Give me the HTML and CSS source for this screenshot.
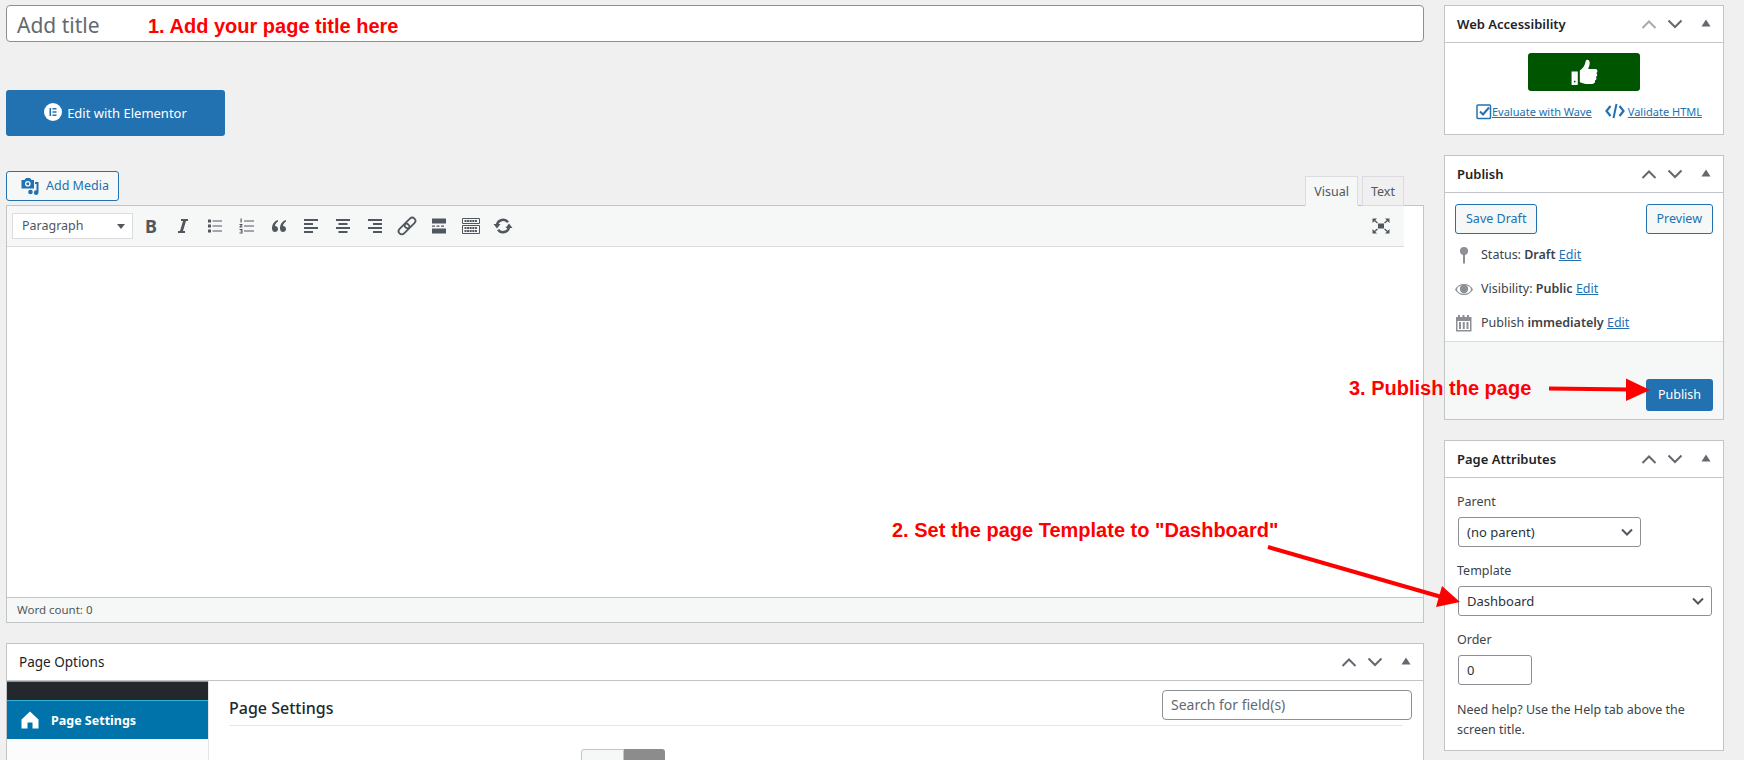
FILE: index.html
```html
<!DOCTYPE html>
<html lang="en">
<head>
<meta charset="utf-8">
<title>Add New Page</title>
<link rel="stylesheet" href="styles.css">
</head>
<body>
<svg width="0" height="0" class="defs">
  <symbol id="up" viewBox="0 0 16 12"><path d="M1.500 10 8 3.500 14.500 10" fill="none" stroke="currentColor" stroke-width="2"/></symbol>
  <symbol id="down" viewBox="0 0 16 12"><path d="M1.500 2.500 8 9 14.500 2.500" fill="none" stroke="currentColor" stroke-width="2"/></symbol>
  <symbol id="tri" viewBox="0 0 10 8"><path d="M5 .5 9.500 7.500H.5z" fill="currentColor"/></symbol>
  <symbol id="chev" viewBox="0 0 12 8"><path d="M1 1.500 6 6.500 11 1.500" fill="none" stroke="currentColor" stroke-width="2"/></symbol>
</svg>
<div class="page">
  <main class="main">
    <div class="title-box">Add title</div>
    <a class="elementor-btn">
      <svg class="e-logo" width="18" height="18" viewBox="0 0 18 18"><circle cx="9" cy="9" r="9" fill="#fff"/><path d="M5.500 5h1.600v8H5.500zM8.500 5h4v1.500h-4zM8.500 8.200h4v1.500h-4zM8.500 11.500h4V13h-4z" fill="#2271b1"/></svg>
      <span>Edit with Elementor</span>
    </a>
    <section class="editor">
      <div class="editor-top">
        <a class="add-media">
          <svg width="18" height="18" viewBox="0 0 18 18"><path d="M.5 3h3L5 1h4l1.500 2h2.500v8.500H.5z" fill="#2271b1"/><circle cx="6.800" cy="6.800" r="2.800" fill="#fff"/><circle cx="6.800" cy="6.800" r="1.500" fill="#2271b1"/><path d="M14 5h3.500v10.500a2.300 2.300 0 1 1-2-2.200V7H14z" fill="#2271b1"/><circle cx="9.500" cy="15" r="2.300" fill="#2271b1"/></svg>
          <span>Add Media</span>
        </a>
        <div class="tabs">
          <span class="tab tab-on">Visual</span>
          <span class="tab">Text</span>
        </div>
      </div>
      <div class="editor-frame">
        <div class="toolbar">
          <div class="format">Paragraph<i class="format-caret"></i></div>
          <span class="tool tool-b">B</span>
          <svg class="tool" viewBox="0 0 20 20"><path d="M8 3h7v2h-2l-3 10h2v2H5v-2h2l3-10H8z" fill="#50575e"/></svg>
          <svg class="tool" viewBox="0 0 20 20"><path d="M3 3.500h3v3H3zM3 8.500h3v3H3zM3 13.500h3v3H3zM7.500 4.500H17v1H7.500zM7.500 9.500H17v1H7.500zM7.500 14.500H17v1H7.500z" fill="#50575e"/></svg>
          <svg class="tool" viewBox="0 0 20 20"><path d="M7 4.500h10v1H7zM7 9.500h10v1H7zM7 14.500h10v1H7zM3.500 2.500h1.200v4H3.500zM2.500 8h3v1l-1.500 1.500h1.500v1h-3v-1L4 9H2.500zM2.500 13h3v4.500h-3v-1h2V15.500h-1v-1h1V14h-2z" fill="#50575e"/></svg>
          <svg class="tool" viewBox="0 0 20 20"><path d="M9 4C5.500 5 3 8 3 12.500 3 15 4.500 16 6 16s3-1.200 3-3-1.300-3-3-3c.2-2 1.500-3.500 3-4.500zM17 4c-3.500 1-6 4-6 8.500 0 2.500 1.500 3.500 3 3.500s3-1.200 3-3-1.300-3-3-3c.2-2 1.500-3.500 3-4.500z" fill="#50575e"/></svg>
          <svg class="tool" viewBox="0 0 20 20"><path d="M3 3h14v2H3zM3 7h9v2H3zM3 11h14v2H3zM3 15h9v2H3z" fill="#50575e"/></svg>
          <svg class="tool" viewBox="0 0 20 20"><path d="M3 3h14v2H3zM5.500 7h9v2h-9zM3 11h14v2H3zM5.500 15h9v2h-9z" fill="#50575e"/></svg>
          <svg class="tool" viewBox="0 0 20 20"><path d="M3 3h14v2H3zM8 7h9v2H8zM3 11h14v2H3zM8 15h9v2H8z" fill="#50575e"/></svg>
          <svg class="tool" viewBox="0 0 20 20"><g transform="rotate(-45 10 10)" fill="none" stroke="#50575e" stroke-width="1.800"><rect x="-.5" y="6.800" width="12.500" height="6.400" rx="3.200"/><rect x="8" y="6.800" width="12.500" height="6.400" rx="3.200"/></g></svg>
          <svg class="tool" viewBox="0 0 20 20"><path d="M3 2.500h14v5H3zM3 12.500h14v5H3zM3 9.500h3v1.200H3zM7.500 9.500h3v1.200h-3zM12 9.500h3v1.200h-3z" fill="#50575e"/></svg>
          <svg class="tool" viewBox="0 0 20 20"><path d="M1.500 2.500h17v5h-17zM1.500 9.500h17v8h-17z" fill="none" stroke="#50575e"/><path d="M3.500 5h13M3.500 12h13M3.500 15h13" fill="none" stroke="#50575e" stroke-width="2" stroke-dasharray="2 .6"/></svg>
          <svg class="tool" viewBox="0 0 20 20"><path d="M4 8.500A6.200 6.200 0 0 1 15 6.300M16 11.500A6.200 6.200 0 0 1 5 13.700" fill="none" stroke="#50575e" stroke-width="2.500"/><path d="M.5 8h7L4 12.500zM12.500 12h7L16 7.500z" fill="#50575e"/></svg>
          <svg class="tool tool-full" viewBox="0 0 20 20"><path d="M7 7.500h6v5H7z" fill="#50575e"/><path d="M1.500 2.500h4.500L1.500 7zM18.500 2.500H14L18.500 7zM1.500 17.500H6L1.500 13zM18.500 17.500H14L18.500 13z" fill="#50575e"/><path d="M3 4l3.500 3M17 4l-3.500 3M3 16l3.500-3M17 16l-3.500-3" stroke="#50575e" stroke-width="1.300"/></svg>
        </div>
        <div class="edit-area"></div>
        <div class="status">Word count: 0</div>
      </div>
    </section>
    <section class="postbox options">
      <header class="box-head">
        <h2>Page Options</h2>
        <div class="handles">
          <svg width="16" height="12"><use href="#up"/></svg>
          <svg width="16" height="12"><use href="#down"/></svg>
          <svg class="tri" width="10" height="8"><use href="#tri"/></svg>
        </div>
      </header>
      <div class="opt-body">
        <nav class="opt-side">
          <div class="opt-dark"></div>
          <div class="opt-item">
            <svg width="18" height="18" viewBox="0 0 18 18"><path d="M9 .5 17.500 8.500V17.500H11.500V11.500H6.500V17.500H.5V8.500z" fill="#fff"/></svg>
            <span>Page Settings</span>
          </div>
        </nav>
        <div class="opt-main">
          <div class="opt-head">
            <h3>Page Settings</h3>
            <div class="search">Search for field(s)</div>
          </div>
          <div class="toggle"><span class="t-off"></span><span class="t-on"></span></div>
        </div>
      </div>
    </section>
  </main>

  <aside class="side">
    <section class="postbox">
      <header class="box-head">
        <h2>Web Accessibility</h2>
        <div class="handles">
          <svg class="dim" width="16" height="12"><use href="#up"/></svg>
          <svg width="16" height="12"><use href="#down"/></svg>
          <svg class="tri" width="10" height="8"><use href="#tri"/></svg>
        </div>
      </header>
      <div class="wa-body">
        <div class="wa-btn">
          <svg width="28" height="28" viewBox="0 0 26 27"><path d="M1 13h6v13H1z" fill="#fff"/><rect x="3.300" y="22" width="1.500" height="1.500" fill="#005500"/><path d="M9 12c3-2 5-5 5.500-8.500C15 1 18.500 1 18.500 5c0 2-1 4-1.500 5.500h7c2.500 0 2.500 3.500.8 4 1.500 1 1.200 3.300-.3 3.800 1 1.200.5 3.200-1 3.500.6 1.600-.4 3.200-2.500 3.200H15c-2 0-4-1-6-1.500z" fill="#fff"/></svg>
        </div>
        <div class="wa-links">
          <svg width="16" height="16" viewBox="0 0 16 16"><rect x="1" y="1" width="13.500" height="13.500" rx="1" fill="none" stroke="#2271b1" stroke-width="1.500"/><path d="M4 7.500 7 10.500 13 3.500" fill="none" stroke="#2271b1" stroke-width="2"/></svg>
          <a class="link">Evaluate with Wave</a>
          <svg class="code-ic" width="20" height="16" viewBox="0 0 20 16"><path d="M5.500 3 1.500 8l4 5M14.500 3l4 5-4 5" fill="none" stroke="#2271b1" stroke-width="2.200"/><path d="M11.500 1 8.500 15" stroke="#2271b1" stroke-width="2"/></svg>
          <a class="link">Validate HTML</a>
        </div>
      </div>
    </section>

    <section class="postbox">
      <header class="box-head">
        <h2>Publish</h2>
        <div class="handles">
          <svg width="16" height="12"><use href="#up"/></svg>
          <svg width="16" height="12"><use href="#down"/></svg>
          <svg class="tri" width="10" height="8"><use href="#tri"/></svg>
        </div>
      </header>
      <div class="pub-top">
        <a class="sec-btn">Save Draft</a>
        <a class="sec-btn">Preview</a>
      </div>
      <div class="pub-rows">
        <div class="pub-row">
          <svg width="18" height="18" viewBox="0 0 18 18"><circle cx="9" cy="5" r="4" fill="#8c8f94"/><path d="M8 8h2v9.500H8z" fill="#8c8f94"/></svg>
          <span>Status: <b>Draft</b> <a class="link">Edit</a></span>
        </div>
        <div class="pub-row">
          <svg width="18" height="18" viewBox="0 0 18 18"><path d="M0 9.500C2 6 5 4 9 4s7 2 9 5.500C16 13 13 15 9 15s-7-2-9-5.500z" fill="#8c8f94"/><ellipse cx="9" cy="9.500" rx="7" ry="4.200" fill="#fff"/><circle cx="9" cy="9" r="4.200" fill="#8c8f94"/></svg>
          <span>Visibility: <b>Public</b> <a class="link">Edit</a></span>
        </div>
        <div class="pub-row">
          <svg width="18" height="18" viewBox="0 0 18 18"><path d="M1 3h2V1h2v2h2.500V1h2v2H12V1h2v2h2.500v14.500H1z" fill="#8c8f94"/><path d="M2.500 7h12.500v9H2.500z" fill="#fff"/><path d="M4 8h2v7H4zM7.750 8h2v7h-2zM11.500 8h2v7h-2z" fill="#8c8f94"/></svg>
          <span>Publish <b>immediately</b> <a class="link">Edit</a></span>
        </div>
      </div>
      <div class="pub-actions"><a class="pri-btn">Publish</a></div>
    </section>

    <section class="postbox">
      <header class="box-head">
        <h2>Page Attributes</h2>
        <div class="handles">
          <svg width="16" height="12"><use href="#up"/></svg>
          <svg width="16" height="12"><use href="#down"/></svg>
          <svg class="tri" width="10" height="8"><use href="#tri"/></svg>
        </div>
      </header>
      <div class="attr-body">
        <p class="attr-label">Parent</p>
        <div class="select select-s">(no parent)<svg width="12" height="8"><use href="#chev"/></svg></div>
        <p class="attr-label">Template</p>
        <div class="select">Dashboard<svg width="12" height="8"><use href="#chev"/></svg></div>
        <p class="attr-label">Order</p>
        <div class="select select-n">0</div>
        <p class="help">Need help? Use the Help tab above the screen title.</p>
      </div>
    </section>
  </aside>
</div>

<svg class="arrows" width="1744" height="760" viewBox="0 0 1744 760">
  <path d="M1549 388.500 1630 389.500" stroke="#f00" stroke-width="4" fill="none"/>
  <path d="M1626 378.500 1650 390 1626 401z" fill="#f00"/>
  <path d="M1268 547 1445 598" stroke="#f00" stroke-width="4" fill="none"/>
  <path d="M1442 586 1460 602 1436 607z" fill="#f00"/>
</svg>
<div class="note note-1">1. Add your page title here</div>
<div class="note note-2">2. Set the page Template to "Dashboard"</div>
<div class="note note-3">3. Publish the page</div>
</body>
</html>
```

FILE: styles.css
```css
* { box-sizing: border-box; }
html, body { margin: 0; padding: 0; }
body {
  position: relative;
  width: 1744px;
  height: 760px;
  overflow: hidden;
  background: #f0f0f1;
  color: #3c434a;
  font: 13px/1.4 "Noto Sans", "Open Sans", sans-serif;
}
.defs { position: absolute; }
.page { display: flex; gap: 20px; padding: 5px 20px 0 6px; }
.main { width: 1418px; flex: none; }
.side { width: 280px; flex: none; display: flex; flex-direction: column; gap: 20px; }

.title-box {
  height: 37px;
  padding-left: 10px;
  background: #fff;
  border: 1px solid #8c8f94;
  border-radius: 4px;
  color: #646970;
  font-size: 21px;
  line-height: 38px;
}
.elementor-btn {
  display: flex;
  align-items: center;
  justify-content: center;
  gap: 5px;
  width: 219px;
  height: 46px;
  margin-top: 48px;
  background: #2271b1;
  border-radius: 3px;
  color: #fff;
  font-size: 13px;
}
.e-logo { margin-top: -2px; }

.editor { margin-top: 35px; }
.editor-top { display: flex; justify-content: space-between; height: 35px; }
.add-media {
  display: flex;
  align-items: center;
  gap: 7px;
  width: 113px;
  height: 30px;
  padding-left: 14px;
  background: #f6f7f7;
  border: 1px solid #2271b1;
  border-radius: 3px;
  color: #2271b1;
  font-size: 12.500px;
}
.tabs {
  display: flex;
  align-self: flex-end;
  gap: 4px;
  padding-right: 20px;
}
.tab {
  height: 30px;
  padding: 0 8px;
  background: #f0f0f1;
  border: 1px solid #dcdcde;
  color: #50575e;
  font-size: 12.500px;
  line-height: 29px;
  position: relative;
  z-index: 1;
}
.tab-on { background: #f6f7f7; border-bottom-color: #f6f7f7; }
.editor-frame { border: 1px solid #c3c4c7; background: #fff; margin-top: -1px; }
.toolbar {
  display: flex;
  align-items: center;
  width: 1397px;
  height: 41px;
  padding-left: 5px;
  background: #f6f7f7;
  border-bottom: 1px solid #dcdcde;
}
.format {
  display: flex;
  align-items: center;
  justify-content: space-between;
  width: 121px;
  height: 26px;
  margin-right: 2px;
  padding: 0 7px 0 9px;
  background: #fff;
  border: 1px solid #dcdcde;
  color: #50575e;
  font-size: 12.500px;
}
.format-caret {
  width: 0;
  height: 0;
  border: 4px solid transparent;
  border-top: 5px solid #50575e;
  border-bottom: 0;
}
.tool { width: 20px; height: 20px; margin: 0 6px; flex: none; }
.tool-b {
  color: #50575e;
  font-size: 18px;
  font-weight: 700;
  line-height: 20px;
  text-align: center;
}
.tool-full { margin-left: auto; margin-right: 13px; }
.edit-area { height: 350px; }
.status {
  height: 25px;
  padding-left: 10px;
  background: #f6f7f7;
  border-top: 1px solid #c3c4c7;
  color: #50575e;
  font-size: 11.500px;
  line-height: 24px;
}

.postbox { background: #fff; border: 1px solid #c3c4c7; }
.box-head {
  display: flex;
  align-items: center;
  justify-content: space-between;
  height: 37px;
  padding: 0 12px;
  border-bottom: 1px solid #c3c4c7;
}
.box-head h2 { margin: 0; color: #1d2327; font-size: 13px; font-weight: 600; }
.options { margin-top: 20px; }
.options h2 { font-size: 13.500px; font-weight: 400; }
.handles { display: flex; align-items: center; color: #646970; gap: 10px; }
.handles .dim { color: #a7aaad; }
.handles .tri { margin-left: 8px; margin-top: -2px; }

.opt-body { display: flex; }
.opt-side { width: 202px; height: 200px; flex: none; background: #fcfcfc; border-right: 1px solid #e5e5e5; }
.opt-dark { height: 20px; background: #23282d; border-top: 1px solid #33b3db; border-bottom: 1px solid #33b3db; }
.opt-item {
  display: flex;
  align-items: center;
  gap: 12px;
  height: 38px;
  padding-left: 14px;
  background: #0073aa;
  color: #fff;
  font-size: 12.500px;
  font-weight: 700;
}
.opt-item span { padding-top: 1px; }
.opt-main { flex: 1; padding: 9px 11px 0 20px; }
.opt-head {
  display: flex;
  align-items: flex-end;
  justify-content: space-between;
  height: 36px;
  border-bottom: 1px solid #e5e5e5;
  margin-right: 9px;
  padding-bottom: 5px;
}
.opt-head h3 { margin: 0 0 1px; color: #23282d; font-size: 16px; font-weight: 500; }
.search {
  width: 250px;
  height: 30px;
  margin-right: -9px;
  padding-left: 8px;
  border: 1px solid #8c8f94;
  border-radius: 4px;
  color: #646970;
  font-size: 14px;
  line-height: 27px;
}
.toggle { display: flex; width: 84px; height: 40px; margin: 23px 0 0 352px; }
.t-off { flex: 1; background: #f6f7f7; border: 1px solid #c3c4c7; border-radius: 3px 0 0 0; }
.t-on { flex: 1; background: #8c8c8c; border-radius: 0 3px 0 0; }

.wa-body { height: 91px; padding-top: 10px; }
.wa-btn {
  display: flex;
  align-items: center;
  justify-content: center;
  width: 112px;
  height: 38px;
  margin-left: 83px;
  background: #005500;
  border-radius: 3px;
}
.wa-links { display: flex; align-items: center; margin: 13px 0 0 31px; font-size: 11px; }
.code-ic { margin: -2px 3px 0 13px; }
.link { color: #2271b1; text-decoration: underline; }

.pub-top { display: flex; justify-content: space-between; padding: 11px 10px 0; }
.sec-btn {
  height: 30px;
  padding: 0 10px;
  background: #f6f7f7;
  border: 1px solid #2271b1;
  border-radius: 3px;
  color: #2271b1;
  font-size: 12.500px;
  line-height: 28px;
}
.pub-rows { padding-top: 4px; }
.pub-row {
  display: flex;
  align-items: center;
  gap: 8px;
  height: 34px;
  padding-left: 10px;
  font-size: 12.500px;
}
.pub-row b { font-weight: 600; }
.pub-actions {
  display: flex;
  justify-content: flex-end;
  align-items: flex-end;
  height: 78px;
  margin-top: 1px;
  padding: 0 10px 8px;
  background: #f6f7f7;
  border-top: 1px solid #dcdcde;
}
.pri-btn {
  width: 67px;
  height: 32px;
  background: #2271b1;
  border-radius: 3px;
  color: #fff;
  font-size: 12.500px;
  line-height: 32px;
  text-align: center;
}

.attr-body { height: 272px; padding: 15px 10px 0 12px; }
.attr-label { margin: 0 0 6px; color: #3c434a; font-size: 12.500px; line-height: 18px; }
.select {
  display: flex;
  align-items: center;
  justify-content: space-between;
  height: 30px;
  margin: 0 1px 15px 1px;
  padding: 0 7px 0 8px;
  border: 1px solid #8c8f94;
  border-radius: 3px;
  color: #2c3338;
  font-size: 13px;
}
.select svg { color: #50575e; }
.select-s { width: 183px; }
.select-n { width: 74px; }
.help { margin: 11px 0 0; font-size: 12.500px; line-height: 20px; }

.arrows { position: absolute; left: 0; top: 0; pointer-events: none; }
.note {
  position: absolute;
  color: #f00;
  font: 700 20px/24px "Liberation Sans", Arial, sans-serif;
  white-space: nowrap;
}
.note-1 { left: 148px; top: 14px; }
.note-2 { left: 892px; top: 518px; }
.note-3 { left: 1349px; top: 376px; }
```
